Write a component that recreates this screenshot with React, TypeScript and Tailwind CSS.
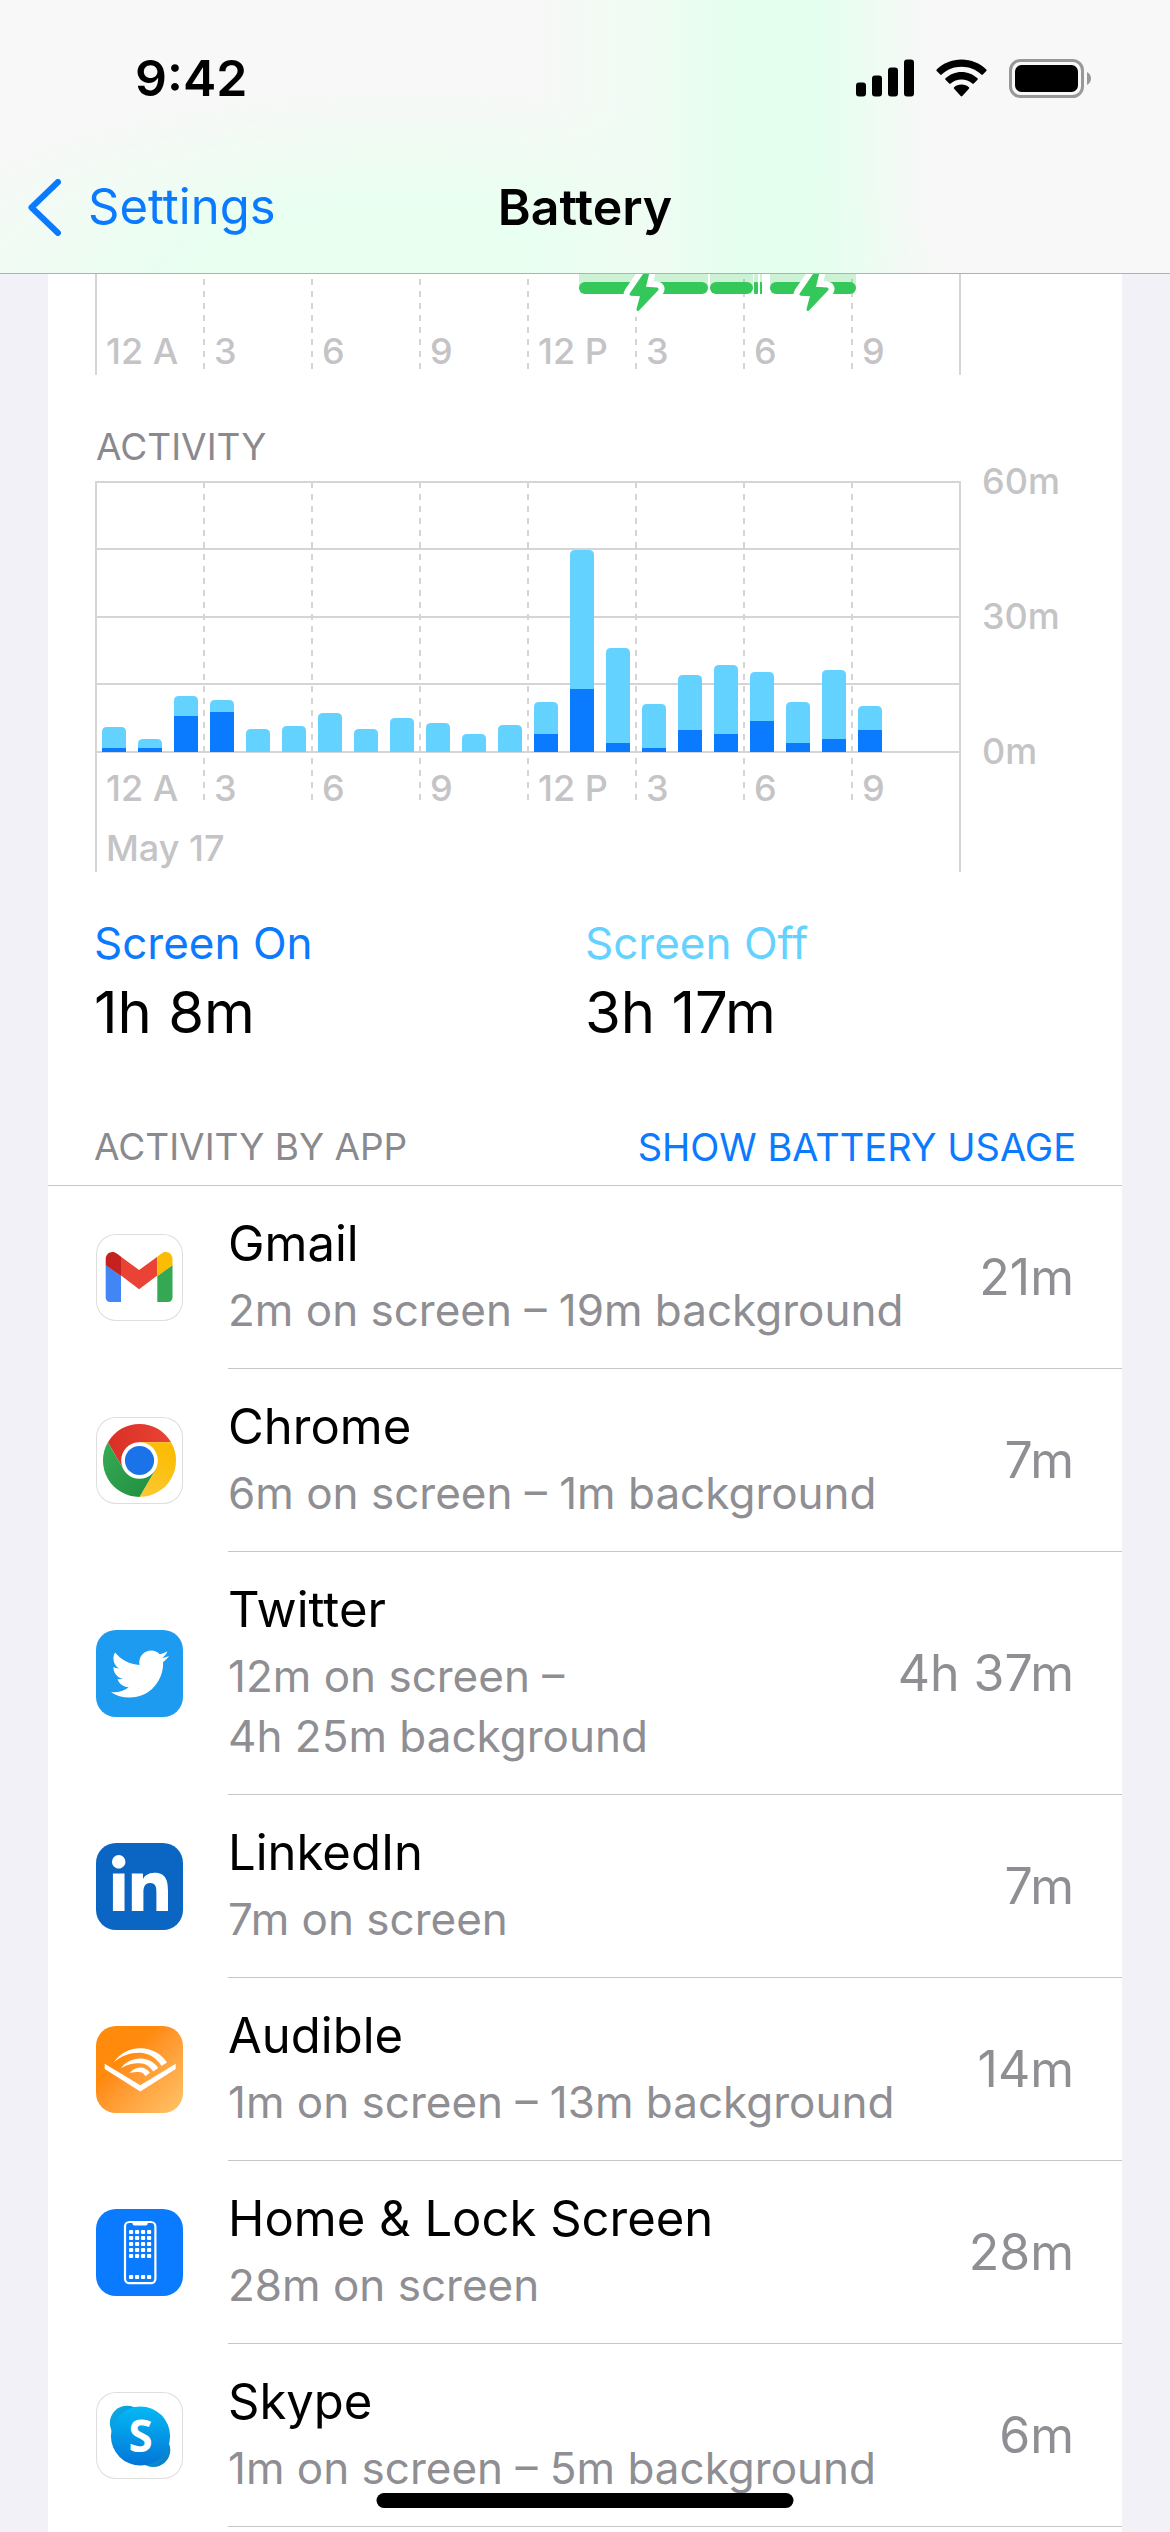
import type { ReactNode } from 'react';
import { FaLinkedinIn, FaTwitter } from 'react-icons/fa';

// heights in chart units, 270 units = 60 minutes
const hours = [
  { total: 25, on: 4 },
  { total: 13, on: 4 },
  { total: 56, on: 36 },
  { total: 52, on: 40 },
  { total: 23, on: 0 },
  { total: 26, on: 0 },
  { total: 39, on: 0 },
  { total: 23, on: 0 },
  { total: 34, on: 0 },
  { total: 29, on: 0 },
  { total: 18, on: 0 },
  { total: 27, on: 0 },
  { total: 50, on: 18 },
  { total: 202, on: 63 },
  { total: 104, on: 9 },
  { total: 48, on: 4 },
  { total: 77, on: 22 },
  { total: 87, on: 18 },
  { total: 80, on: 31 },
  { total: 50, on: 9 },
  { total: 82, on: 13 },
  { total: 46, on: 22 },
];

const hourLabels = ['12 A', '3', '6', '9', '12 P', '3', '6', '9'];

const charging = [
  { x: 483, width: 129, rx: 6 },
  { x: 614, width: 43, rx: 6 },
  { x: 658, width: 4, rx: 1 },
  { x: 664, width: 2, rx: 0 },
  { x: 674, width: 86, rx: 6 },
];

function IconTile({ className, children }: { className: string; children: ReactNode }) {
  return (
    <div
      className={`flex size-[87px] shrink-0 items-center justify-center overflow-hidden rounded-[20px] ${className}`}
    >
      {children}
    </div>
  );
}

function GmailIcon() {
  return (
    <IconTile className="bg-white ring-1 ring-inset ring-[#dedede]">
      <svg viewBox="0 0 87 87" className="size-full" aria-hidden="true">
        <path d="M9.7 31 L25 42 V68 H14.5 Q9.7 68 9.7 63.2 Z" fill="#4285f4" />
        <path d="M76.5 31 L61.3 42 V68 H71.7 Q76.5 68 76.5 63.2 Z" fill="#34a853" />
        <path d="M25 22.7 L43.1 36 L61.3 22.7 V41.5 L43.1 55.2 L25 41.5 Z" fill="#ea4335" />
        <path d="M9.7 31.3 V25 C9.7 18.6 16.6 15.6 21.5 20 L25 22.7 V42 Z" fill="#c5221f" />
        <path d="M76.5 31.3 V25 C76.5 18.6 69.6 15.6 64.7 20 L61.3 22.7 V42 Z" fill="#fbbc04" />
      </svg>
    </IconTile>
  );
}

function ChromeIcon() {
  return (
    <IconTile className="bg-white ring-1 ring-inset ring-[#dedede]">
      <svg viewBox="-43.5 -43.5 87 87" className="size-full" aria-hidden="true">
        <defs>
          <linearGradient id="chrome-red" x1="0" y1="0" x2="1" y2="0">
            <stop offset="0" stopColor="#d93025" />
            <stop offset="1" stopColor="#ea4335" />
          </linearGradient>
          <linearGradient id="chrome-yellow" x1="0" y1="1" x2="0.4" y2="0">
            <stop offset="0" stopColor="#fcc934" />
            <stop offset="1" stopColor="#fbbc04" />
          </linearGradient>
          <linearGradient id="chrome-green" x1="1" y1="1" x2="0" y2="0.2">
            <stop offset="0" stopColor="#1e8e3e" />
            <stop offset="1" stopColor="#34a853" />
          </linearGradient>
        </defs>
        <path d="M-31.6 -18.3 A36.5 36.5 0 0 1 31.6 -18.3 H0 L-15.8 9.2 Z" fill="url(#chrome-red)" />
        <path d="M31.6 -18.3 A36.5 36.5 0 0 1 0 36.5 L15.8 9.2 L0 -18.3 Z" fill="url(#chrome-yellow)" />
        <path d="M0 36.5 A36.5 36.5 0 0 1 -31.6 -18.3 L-15.8 9.2 H15.8 Z" fill="url(#chrome-green)" />
        <circle r="18.3" fill="#fff" />
        <circle r="14.6" fill="#1a73e8" />
      </svg>
    </IconTile>
  );
}

function TwitterIcon() {
  return (
    <IconTile className="bg-[#1d9bf0] text-white">
      <FaTwitter size={58} />
    </IconTile>
  );
}

function LinkedInIcon() {
  return (
    <IconTile className="bg-[#0a66c2] text-white">
      <FaLinkedinIn size={64} />
    </IconTile>
  );
}

function AudibleIcon() {
  return (
    <IconTile className="bg-linear-to-br from-[#ff8a0c] from-35% to-[#ffc466]">
      <svg viewBox="0 0 87 87" className="size-full" fill="#fff" aria-hidden="true">
        <path d="M8.7 37.7 L44.3 59.2 L79.7 37.7 V43 L44.3 65.5 L8.7 43 Z" />
        <path d="M17.5 36.8 C23 28 33 22.2 44.3 22.2 C55.6 22.2 65 27.5 71 36.4 L65.5 40 C60.5 32 52.5 26.8 43.5 26.8 C33.5 26.8 25 30 17.5 36.8 Z" />
        <path d="M25 42.2 C29.5 36.3 36.5 32.6 44.3 32.6 C51.7 32.6 58 36 62.3 42 L57.2 45.6 C54 40.6 49.5 37.2 43.5 37.2 C37 37.2 31.5 38.3 25 42.2 Z" />
        <path d="M33.6 46.9 C36.5 43.5 40 41.4 44.3 41.4 C48.5 41.4 51.5 43.3 54 46.8 L49.5 50.2 C48 47.6 45.8 46 42.5 46 C39.5 46 37 46.2 33.6 46.9 Z" />
      </svg>
    </IconTile>
  );
}

function HomeScreenIcon() {
  return (
    <IconTile className="bg-[#0a7aff]">
      <svg viewBox="0 0 87 87" className="size-full" fill="#fff" aria-hidden="true">
        <rect x="29" y="13" width="30.4" height="61.2" rx="4.5" fill="none" stroke="#fff" strokeWidth="2.2" />
        <path d="M36.5 12.5 H51.7 V14.6 Q51.7 16.6 49.7 16.6 H38.5 Q36.5 16.6 36.5 14.6 Z" />
        {[23, 29, 35, 41, 47, 68].map((y) =>
          [35, 41, 47, 53].map((x) => (
            <rect key={`${x}-${y}`} x={x - 2} y={y - 2} width="4.2" height="4" rx="1" />
          ))
        )}
      </svg>
    </IconTile>
  );
}

function SkypeIcon() {
  return (
    <IconTile className="bg-white ring-1 ring-inset ring-[#dedede]">
      <svg viewBox="0 0 87 87" className="size-full" aria-hidden="true">
        <defs>
          <linearGradient id="skype-face" x1="0" y1="0" x2="0" y2="1">
            <stop offset="0" stopColor="#04b9f4" />
            <stop offset="1" stopColor="#0375d8" />
          </linearGradient>
          <linearGradient id="skype-back" x1="0" y1="0" x2="1" y2="1">
            <stop offset="0" stopColor="#0cb0e8" />
            <stop offset="1" stopColor="#0879c4" />
          </linearGradient>
        </defs>
        <circle cx="31" cy="31" r="17.2" fill="url(#skype-back)" />
        <circle cx="57.3" cy="58" r="17" fill="url(#skype-back)" />
        <circle cx="44.5" cy="44" r="29.6" fill="url(#skype-face)" />
        <text
          x="44.5"
          y="59.5"
          textAnchor="middle"
          fill="#fff"
          className="font-['Noto_Sans',sans-serif] text-[44px] font-bold"
        >
          S
        </text>
      </svg>
    </IconTile>
  );
}

const apps = [
  { name: 'Gmail', detail: '2m on screen – 19m background', time: '21m', icon: <GmailIcon /> },
  { name: 'Chrome', detail: '6m on screen – 1m background', time: '7m', icon: <ChromeIcon /> },
  {
    name: 'Twitter',
    detail: '12m on screen – 4h\u00a025m\u00a0background',
    time: '4h 37m',
    icon: <TwitterIcon />,
  },
  { name: 'LinkedIn', detail: '7m on screen', time: '7m', icon: <LinkedInIcon /> },
  { name: 'Audible', detail: '1m on screen – 13m background', time: '14m', icon: <AudibleIcon /> },
  { name: 'Home & Lock Screen', detail: '28m on screen', time: '28m', icon: <HomeScreenIcon /> },
  { name: 'Skype', detail: '1m on screen – 5m background', time: '6m', icon: <SkypeIcon /> },
];

function StatusBar() {
  return (
    <div className="flex h-[141px] items-start justify-between pt-12 pr-[79px] pl-[135px]">
      <span className="text-[50px] leading-[60px] font-semibold">9:42</span>
      <div className="flex h-[60px] items-center gap-[22px]">
        <svg viewBox="0 0 58 38" className="h-[38px] w-[58px]" aria-hidden="true">
          <rect x="0" y="23.5" width="10" height="14" rx="3" />
          <rect x="16" y="16.5" width="10" height="21" rx="3" />
          <rect x="32" y="8.5" width="10" height="29" rx="3" />
          <rect x="48" y="0.5" width="10" height="37" rx="3" />
        </svg>
        <svg viewBox="0 0 51 38" className="h-[38px] w-[51px]" aria-hidden="true">
          <path d="M25.5 0.5 C35 0.5 44 4.2 50.3 10.6 Q51 11.3 50.3 12 L46.8 15.6 Q46 16.3 45.3 15.6 C40 10.5 33 7.8 25.5 7.8 C18 7.8 11 10.5 5.7 15.6 Q5 16.3 4.2 15.6 L0.7 12 Q0 11.3 0.7 10.6 C7 4.2 16 0.5 25.5 0.5 Z" />
          <path d="M25.5 13 C31.6 13 37.2 15.3 41.5 19.3 Q42.2 20 41.5 20.7 L37.8 24.4 Q37 25.1 36.3 24.4 C33.3 21.8 29.5 20.4 25.5 20.4 C21.5 20.4 17.7 21.8 14.7 24.4 Q14 25.1 13.2 24.4 L9.5 20.7 Q8.8 20 9.5 19.3 C13.8 15.3 19.4 13 25.5 13 Z" />
          <path d="M25.5 25.5 C28.4 25.5 31 26.5 32.9 28.2 Q33.7 29 32.9 29.8 L26.3 37 Q25.5 37.8 24.7 37 L18.1 29.8 Q17.3 29 18.1 28.2 C20 26.5 22.6 25.5 25.5 25.5 Z" />
        </svg>
        <svg viewBox="0 0 82 39" className="h-[39px] w-[82px]" aria-hidden="true">
          <rect x="1.5" y="1.5" width="72" height="36" rx="10" fill="none" stroke="#989898" strokeWidth="3" />
          <rect x="6" y="6" width="63" height="27" rx="6.5" />
          <path d="M78 13 C83.3 15.5 83.3 23.5 78 26 Z" fill="#989898" />
        </svg>
      </div>
    </div>
  );
}

function Header() {
  return (
    <header className="border-b border-[#b0b2b1] bg-[#f7f8f7] bg-[linear-gradient(90deg,transparent_46%,#effcf3_56%,#e5ffee_63%,#e5ffee_70%,transparent_79%),radial-gradient(ellipse_46%_75%_at_35%_108%,#e9fff0_45%,transparent)]">
      <StatusBar />
      <nav className="grid h-[132px] grid-cols-[1fr_auto_1fr] items-center px-7">
        <a href="#settings" className="flex items-center gap-[27px] text-[#0a7aff]">
          <svg viewBox="0 0 33 57" className="h-[57px] w-[33px]" aria-hidden="true">
            <path
              d="M30 3 L3.5 28.5 L30 54"
              fill="none"
              stroke="currentColor"
              strokeWidth="6"
              strokeLinecap="round"
              strokeLinejoin="round"
            />
          </svg>
          <span className="text-[49px] leading-[60px]">Settings</span>
        </a>
        <h1 className="text-[50px] leading-[60px] font-semibold">Battery</h1>
      </nav>
    </header>
  );
}

function Bolt({ x }: { x: number }) {
  return (
    <path
      transform={`translate(${x} 0)`}
      d="M20.5 -8 L2 19 Q0.5 21.5 3 21.8 L12 22.3 L8.5 35 Q8.5 38 11 36.5 L30 16.5 Q31.5 14 29 13.6 L18 12.8 L23 -8 Z"
      fill="#34c759"
      stroke="#fff"
      strokeWidth="12"
      strokeLinejoin="round"
      paintOrder="stroke"
    />
  );
}

function HourLabels({ y }: { y: number }) {
  return (
    <g fill="#c4c4c6" className="text-[36px] font-medium">
      {hourLabels.map((label, i) => (
        <text key={i} x={i * 108 + 10} y={y}>
          {label}
        </text>
      ))}
    </g>
  );
}

function BatteryLevelChart() {
  return (
    <svg viewBox="-48 0 1074 101" className="block w-full" role="img" aria-label="Battery level">
      <g stroke="#d5d5d6" strokeWidth="2">
        <path d="M0 0 V101 M864 0 V101" />
        {hourLabels.slice(1).map((_, i) => (
          <path key={i} d={`M${(i + 1) * 108} 5 V95`} strokeDasharray="6 6" />
        ))}
      </g>
      {charging.map((c) => (
        <g key={c.x}>
          <rect x={c.x} y="0" width={c.width} height="14" fill="#34c759" fillOpacity="0.25" />
          <rect x={c.x} y="8" width={c.width} height="12" rx={c.rx} fill="#34c759" />
        </g>
      ))}
      <Bolt x={532} />
      <Bolt x={702} />
      <HourLabels y={90} />
    </svg>
  );
}

function ActivityChart() {
  return (
    <svg
      viewBox="-48 -2 1074 392"
      className="block w-full overflow-visible"
      role="img"
      aria-label="Activity by hour"
    >
      <g stroke="#d5d5d6" strokeWidth="2">
        <path d="M0 -1 V390 M864 -1 V390" />
        <path d="M0 0 H864 M0 67 H864 M0 135 H864 M0 202 H864 M0 270 H864" />
        {hourLabels.slice(1).map((_, i) => (
          <path key={i} d={`M${(i + 1) * 108} 0 V324`} strokeDasharray="6 6" />
        ))}
      </g>
      {hours.map((hour, i) => {
        const x = i * 36 + 6;
        const top = 270 - hour.total;
        return (
          <g key={i}>
            <path
              d={`M${x} 270 V${top + 5} q0 -5 5 -5 h14 q5 0 5 5 V270 Z`}
              fill="#64d2ff"
            />
            <rect x={x} y={270 - hour.on} width="24" height={hour.on} fill="#0a7aff" />
          </g>
        );
      })}
      <HourLabels y={319} />
      <g fill="#c4c4c6" className="text-[36px] font-medium">
        <text x="10" y="379">
          May 17
        </text>
        <text x="886" y="12">
          60m
        </text>
        <text x="886" y="147">
          30m
        </text>
        <text x="886" y="282">
          0m
        </text>
      </g>
    </svg>
  );
}

export default function App() {
  return (
    <div className="relative flex min-h-screen flex-col bg-[#f2f1f7] font-['Inter','Liberation_Sans',sans-serif] text-black">
      <Header />

      <main className="mx-12 flex-1 bg-white">
        <BatteryLevelChart />

        <h2 className="px-12 pt-12 pb-[9px] text-[37px] leading-[48px] text-[#8a8a8e]">ACTIVITY</h2>
        <ActivityChart />

        <dl className="grid grid-cols-2 pt-[43px]">
          <div className="pl-[46px]">
            <dt className="text-[44px] leading-[56px] text-[#0a7aff]">Screen On</dt>
            <dd className="mt-[5px] text-[58px] leading-[72px]">1h 8m</dd>
          </div>
          <div>
            <dt className="text-[44px] leading-[56px] text-[#64d2ff]">Screen Off</dt>
            <dd className="mt-[5px] text-[58px] leading-[72px]">3h 17m</dd>
          </div>
        </dl>

        <div className="mt-[75px] flex items-center justify-between border-b border-[#c6c6c8] px-[46px] pb-3.5 leading-[48px]">
          <h2 className="text-[37px] text-[#8a8a8e]">ACTIVITY BY APP</h2>
          <button type="button" className="text-[38px] text-[#0a7aff]">
            SHOW BATTERY USAGE
          </button>
        </div>

        <ul>
          {apps.map((app) => (
            <li key={app.name} className="flex items-center gap-[45px] pl-12">
              {app.icon}
              <div className="flex flex-1 items-center justify-between gap-8 border-b border-[#c6c6c8] py-7 pr-12">
                <div>
                  <h3 className="text-[49px] leading-[60px]">{app.name}</h3>
                  <p className="mt-1.5 text-[44px] leading-[60px] text-[#8e8e93]">{app.detail}</p>
                </div>
                <span className="shrink-0 text-[50px] leading-[60px] text-[#8e8e93]">{app.time}</span>
              </div>
            </li>
          ))}
        </ul>
      </main>

      <div className="absolute bottom-6 left-1/2 h-[15px] w-[417px] -translate-x-1/2 rounded-full bg-black" />
    </div>
  );
}
